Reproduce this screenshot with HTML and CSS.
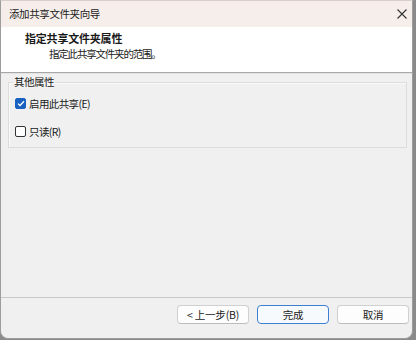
FILE: index.html
```html
<!DOCTYPE html>
<html lang="zh-CN">
<head>
  <meta charset="UTF-8" />
  <title>添加共享文件夹向导</title>
  <link rel="stylesheet" href="styles.css">
</head>
<body>
  <div class="window">
    <div class="titlebar">
      <span class="title">添加共享文件夹向导</span>
      <svg class="close" width="10" height="10" viewBox="0 0 10 10">
        <path d="M0.5 0.5 L9.5 9.5 M9.5 0.5 L0.5 9.5" stroke="#333" stroke-width="1.1" fill="none"/>
      </svg>
    </div>

    <div class="header">
      <div class="header-title">指定共享文件夹属性</div>
      <div class="header-sub">指定此共享文件夹的范围。</div>
    </div>

    <div class="content">
      <fieldset class="group">
        <legend>其他属性</legend>
        <label class="check">
          <span class="box checked">
            <svg width="8" height="7" viewBox="0 0 8 7"><path d="M1 3.6 L3 5.5 L7 1.2" stroke="#fff" stroke-width="1.3" fill="none"/></svg>
          </span>
          启用此共享(E)
        </label>
        <label class="check">
          <span class="box"></span>
          只读(R)
        </label>
      </fieldset>
    </div>

    <div class="footer">
      <button class="btn">&lt; 上一步(B)</button>
      <button class="btn default">完成</button>
      <button class="btn">取消</button>
    </div>
  </div>
</body>
</html>
```

FILE: styles.css
```css
html, body {
  margin: 0;
  padding: 0;
  background-color: #8a8a8a;
}

body {
  font-family: "Noto Sans CJK SC", "Liberation Sans", sans-serif;
  font-size: 10.5px;
  letter-spacing: -0.6px;
  color: #1a1a1a;
}

.window {
  width: 411px;
  height: 337px;
  background-color: #f0f0f0;
  border: 1px solid #9c9c9c;
  border-top-color: #d8cfcc;
  border-radius: 0 0 8px 8px;
  display: flex;
  flex-direction: column;
  overflow: hidden;
}

.titlebar {
  height: 26px;
  background-color: #f6eeeb;
  display: flex;
  align-items: center;
  justify-content: space-between;
  padding: 0 5px 0 8px;
  flex-shrink: 0;
}

.title {
  font-size: 10.5px;
  letter-spacing: -0.4px;
  line-height: 26px;
}

.close {
  display: block;
}

.header {
  background-color: #fff;
  height: 46px;
  padding: 3px 0 0 24px;
  box-sizing: border-box;
  border-bottom: 1px solid #a8a8a8;
  box-shadow: 0 1px 0 #e3e3e3;
  flex-shrink: 0;
}

.header-title {
  font-weight: bold;
  font-size: 11px;
  letter-spacing: -0.2px;
  line-height: 16px;
}

.header-sub {
  font-size: 10.5px;
  letter-spacing: -1.2px;
  line-height: 16px;
  padding-left: 24px;
}

.content {
  flex: 1;
  padding: 2px 5px 0 7px;
}

.group {
  margin: 0;
  padding: 6px 6px 10px 6px;
  border: 1px solid #dcdcdc;
  box-shadow: inset 1px 1px 0 #fafafa;
  height: 73px;
  box-sizing: border-box;
}

.group legend {
  padding: 0 1px;
  margin-left: -2px;
  font-size: 10.5px;
  letter-spacing: -0.5px;
  line-height: 14px;
}

.check {
  display: flex;
  align-items: center;
  gap: 3px;
  height: 16px;
  margin-bottom: 12px;
}

.box {
  width: 9px;
  height: 9px;
  border: 1px solid #333;
  border-radius: 2px;
  background-color: #fff;
  display: flex;
  align-items: center;
  justify-content: center;
}

.box.checked {
  background-color: #1a62c2;
  border-color: #1a62c2;
}

.footer {
  height: 33px;
  border-top: 1px solid #c8c8c8;
  display: flex;
  justify-content: flex-end;
  align-items: flex-start;
  gap: 8px;
  padding: 7px 3px 0 0;
  flex-shrink: 0;
}

.btn {
  width: 72px;
  height: 19px;
  padding: 0;
  font-family: "Noto Sans CJK SC", "Liberation Sans", sans-serif;
  font-size: 10.5px;
  letter-spacing: -0.2px;
  color: #1a1a1a;
  background-color: #fdfdfd;
  border: 1px solid #d0d0d0;
  border-bottom-color: #bdbdbd;
  border-radius: 4px;
}

.btn.default {
  background-color: #f7fafd;
  border: 1px solid #3d7fd0;
}
```
